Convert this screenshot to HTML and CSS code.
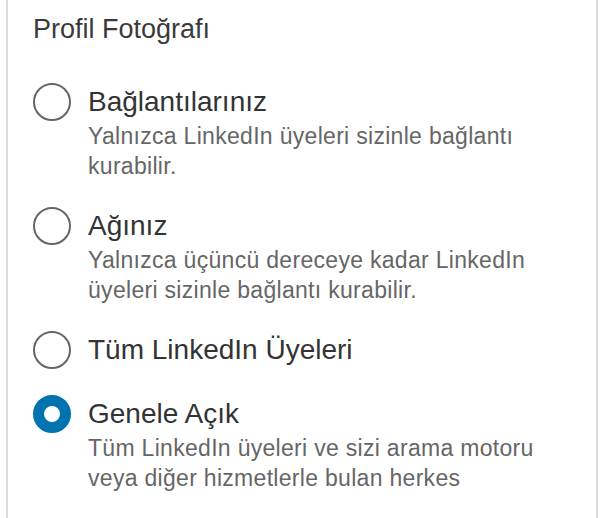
FILE: index.html
```html
<!DOCTYPE html>
<html lang="tr">
<head>
<meta charset="utf-8">
<title>Profil Fotoğrafı</title>
<link rel="stylesheet" href="styles.css">
</head>
<body>
<div class="panel">
  <h2 class="heading">Profil Fotoğrafı</h2>
  <ul class="options">
    <li class="option">
      <span class="radio"></span>
      <div class="text">
        <div class="title">Bağlantılarınız</div>
        <div class="desc">Yalnızca LinkedIn üyeleri sizinle bağlantı kurabilir.</div>
      </div>
    </li>
    <li class="option">
      <span class="radio"></span>
      <div class="text">
        <div class="title">Ağınız</div>
        <div class="desc">Yalnızca üçüncü dereceye kadar LinkedIn üyeleri sizinle bağlantı kurabilir.</div>
      </div>
    </li>
    <li class="option">
      <span class="radio"></span>
      <div class="text">
        <div class="title">Tüm LinkedIn Üyeleri</div>
      </div>
    </li>
    <li class="option">
      <span class="radio checked"></span>
      <div class="text">
        <div class="title">Genele Açık</div>
        <div class="desc">Tüm LinkedIn üyeleri ve sizi arama motoru veya diğer hizmetlerle bulan herkes</div>
      </div>
    </li>
  </ul>
</div>
</body>
</html>
```

FILE: styles.css
```css
html, body {
  margin: 0;
  padding: 0;
  background: #fff;
}
body {
  font-family: "Liberation Sans", Arial, Helvetica, sans-serif;
}
.panel {
  margin-left: 6px;
  width: 563px;
  min-height: 518px;
  border-left: 2px solid #dcdcdc;
  border-right: 2px solid #dcdcdc;
  padding: 10px 0 0 25px;
  box-sizing: content-box;
}
.heading {
  margin: 0 0 35px;
  font-weight: normal;
  font-size: 27px;
  line-height: 38px;
  color: #3a3a3a;
}
.options {
  list-style: none;
  margin: 0;
  padding: 0;
}
.option {
  display: flex;
  align-items: flex-start;
  gap: 17px;
  margin-bottom: 26px;
}
.radio {
  flex: none;
  width: 38px;
  height: 38px;
  box-sizing: border-box;
  border: 2px solid #666;
  border-radius: 50%;
  background: #fff;
}
.radio.checked {
  border: 11px solid #0073b1;
}
.text {
  width: 455px;
}
.title {
  font-size: 28px;
  line-height: 38px;
  color: #333;
}
.desc {
  font-size: 23px;
  line-height: 30px;
  letter-spacing: 0.3px;
  color: #666;
}
```
